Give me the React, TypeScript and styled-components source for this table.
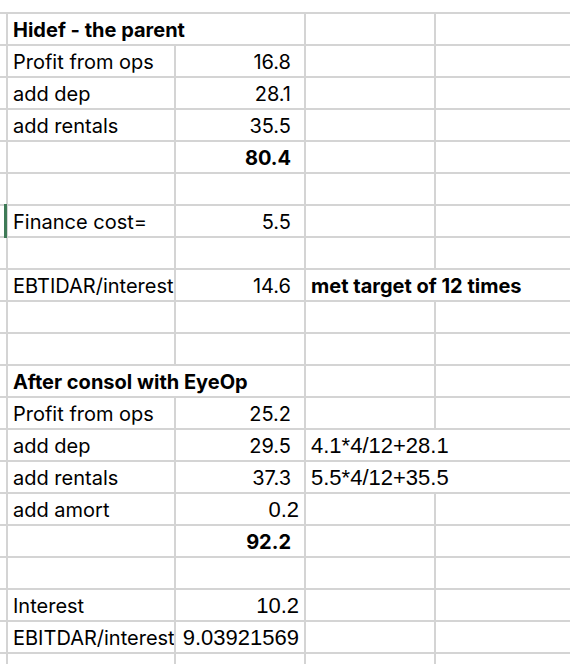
import styled, { createGlobalStyle } from "styled-components";

const GlobalStyle = createGlobalStyle`
    html, body {
        margin: 0;
        padding: 0;
        background: #fff;
    }
`;

const Sheet = styled.div`
    width: 570px;
    height: 664px;
    overflow: hidden;
    display: grid;
    grid-template-columns: 6px 166px 128px 128px 1fr;
    grid-template-rows: 12px;
    grid-auto-rows: 30px;
    gap: 2px;
    background: #d4d4d4;
`;

const Stub = styled.div`
    background: #fff;
`;

const TopStub = styled(Stub)`
    grid-column: 1 / -1;
`;

type CellProps = {
    $span?: number;
    $num?: boolean;
    $bold?: boolean;
    $plain?: boolean;
    $marked?: boolean;
};

const Cell = styled.div<CellProps>`
    position: relative;
    grid-column: span ${(p) => p.$span ?? 1};
    background: #fff;
    box-sizing: border-box;
    padding: 2px ${(p) => (p.$num ? (p.$plain ? "5px" : "13px") : "4px")} 0
        ${(p) => (p.$num ? "0" : "5px")};
    line-height: 28px;
    text-align: ${(p) => (p.$num ? "right" : "left")};
    white-space: nowrap;
    overflow: hidden;
    color: #000;
    font-family: ${(p) =>
        p.$plain ? '"Liberation Sans", Arial, sans-serif' : 'Inter, "Liberation Sans", sans-serif'};
    font-size: ${(p) => (p.$plain ? "22px" : "20px")};
    font-weight: ${(p) => (p.$bold ? 700 : 400)};
    ${(p) =>
        p.$marked &&
        `
        overflow: visible;
        &::before {
            content: "";
            position: absolute;
            left: -4px;
            top: -2px;
            bottom: -2px;
            width: 3px;
            background: #3f7a57;
        }
    `}
`;

type CellData = {
    text?: string;
    num?: boolean;
    bold?: boolean;
    plain?: boolean;
    span?: number;
    marked?: boolean;
};

const empty: CellData[] = [{}, {}, {}, {}];

const rows: CellData[][] = [
    [{ text: "Hidef - the parent", bold: true, span: 2 }, {}, {}],
    [{ text: "Profit from ops" }, { text: "16.8", num: true }, {}, {}],
    [{ text: "add dep" }, { text: "28.1", num: true }, {}, {}],
    [{ text: "add rentals" }, { text: "35.5", num: true }, {}, {}],
    [{}, { text: "80.4", num: true, bold: true }, {}, {}],
    empty,
    [{ text: "Finance cost=", marked: true }, { text: "5.5", num: true }, {}, {}],
    empty,
    [
        { text: "EBTIDAR/interest" },
        { text: "14.6", num: true },
        { text: "met target of 12 times", bold: true, span: 2 },
    ],
    empty,
    empty,
    [{ text: "After consol with EyeOp", bold: true, span: 2 }, {}, {}],
    [{ text: "Profit from ops" }, { text: "25.2", num: true }, {}, {}],
    [
        { text: "add dep" },
        { text: "29.5", num: true },
        { text: "4.1*4/12+28.1", plain: true, span: 2 },
    ],
    [
        { text: "add rentals" },
        { text: "37.3", num: true },
        { text: "5.5*4/12+35.5", plain: true, span: 2 },
    ],
    [{ text: "add amort" }, { text: "0.2", num: true, plain: true }, {}, {}],
    [{}, { text: "92.2", num: true, bold: true }, {}, {}],
    empty,
    [{ text: "Interest" }, { text: "10.2", num: true, plain: true }, {}, {}],
    [{ text: "EBITDAR/interest" }, { text: "9.03921569", num: true, plain: true }, {}, {}],
    empty,
];

function App() {
    return (
        <>
            <GlobalStyle />
            <Sheet>
                <TopStub />
                {rows.map((row, r) => [
                    <Stub key={`s${r}`} />,
                    ...row.map((c, i) => (
                        <Cell
                            key={`${r}-${i}`}
                            $span={c.span}
                            $num={c.num}
                            $bold={c.bold}
                            $plain={c.plain}
                            $marked={c.marked}
                        >
                            {c.text}
                        </Cell>
                    )),
                ])}
            </Sheet>
        </>
    );
}

export default App;
